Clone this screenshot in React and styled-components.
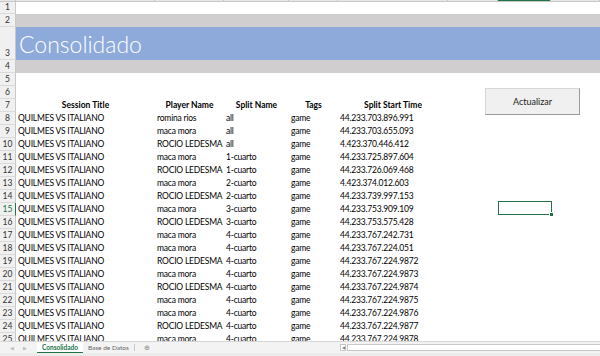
import React from "react";
import styled, { createGlobalStyle } from "styled-components";

const GlobalStyle = createGlobalStyle`
  html, body { margin: 0; padding: 0; background: #fff; overflow: hidden; }
  body { font-family: Lato, "Open Sans", sans-serif; }
  * { box-sizing: border-box; }
`;

const COLS = "16px 139px 69px 65px 49px 110px 50px 53px 49px";

const Window = styled.div`
  position: relative;
  width: 600px;
  height: 356px;
  display: flex;
  flex-direction: column;
  overflow: hidden;
`;

const ColStrip = styled.div`
  display: grid;
  grid-template-columns: ${COLS};
  height: 2px;
  background: #e6e6e6;
  border-bottom: 1px solid #c8c8c8;
  flex-shrink: 0;
`;

const ColMark = styled.div`
  border-right: 1px solid #c6c6c6;
  background: ${(p) => (p.$active ? "#217346" : "transparent")};
`;

const Sheet = styled.div`
  flex: 1;
  overflow: hidden;
  position: relative;
`;

const Row = styled.div`
  display: grid;
  grid-template-columns: ${COLS};
  height: ${(p) => p.$h || 13}px;
`;

const RowHead = styled.div`
  background: #f0f0f0;
  border-right: 1px solid ${(p) => (p.$active ? "#217346" : "#c8c8c8")};
  border-bottom: 1px solid #dadada;
  color: ${(p) => (p.$active ? "#217346" : "#333")};
  font-size: 8.5px;
  display: flex;
  align-items: flex-end;
  justify-content: center;
  padding-bottom: 1px;
`;

const Band = styled.div`
  grid-column: 2 / -1;
  background: ${(p) => p.$bg};
  display: flex;
  align-items: center;
`;

const Title = styled.span`
  font-family: Lato, sans-serif;
  font-weight: 300;
  font-size: 23px;
  color: #fff;
  padding-left: 3px;
  padding-top: 1px;
`;

const Cell = styled.div`
  font-size: 8.5px;
  color: #000;
  white-space: nowrap;
  overflow: visible;
  line-height: 13px;
  letter-spacing: ${(p) => (p.$head ? 0 : -0.2)}px;
  padding-left: ${(p) => (p.$head ? 0 : 2)}px;
  font-weight: ${(p) => (p.$head ? 700 : 400)};
  text-align: ${(p) => (p.$head ? "center" : "left")};
`;

const Button = styled.div`
  position: absolute;
  left: 485px;
  top: 86px;
  width: 95px;
  height: 27px;
  background: #f0f0f0;
  border: 1px solid #d6d6d6;
  border-right-color: #9a9a9a;
  border-bottom-color: #9a9a9a;
  display: flex;
  align-items: center;
  justify-content: center;
  font-size: 9px;
  color: #222;
`;

const Selected = styled.div`
  position: absolute;
  left: 498px;
  top: 199px;
  width: 54px;
  height: 14px;
  border: 1.5px solid #217346;
  &::after {
    content: "";
    position: absolute;
    right: -3px;
    bottom: -3px;
    width: 3px;
    height: 3px;
    background: #217346;
    border: 1px solid #fff;
  }
`;

const TabBar = styled.div`
  height: 12px;
  flex-shrink: 0;
  background: #f3f3f3;
  border-top: 1px solid #d6d6d6;
  display: flex;
  align-items: stretch;
  font-size: 6.5px;
  color: #666;
`;

const Nav = styled.div`
  width: 37px;
  display: flex;
  align-items: center;
  justify-content: space-around;
  padding: 0 6px;
  color: #bdbdbd;
  font-size: 5px;
`;

const Tab = styled.div`
  display: flex;
  align-items: center;
  padding: 0 5px;
  background: ${(p) => (p.$active ? "#fff" : "transparent")};
  color: ${(p) => (p.$active ? "#217346" : "#666")};
  font-weight: ${(p) => (p.$active ? 700 : 400)};
  border-bottom: ${(p) => (p.$active ? "1.5px solid #217346" : "none")};
  border-right: ${(p) => (p.$active ? "none" : "1px solid #c8c8c8")};
  margin: ${(p) => (p.$active ? "0" : "2px 0")};
`;

const AddTab = styled.div`
  margin-left: 9px;
  display: flex;
  align-items: center;
  color: #888;
`;

const Scroll = styled.div`
  margin-left: auto;
  width: 260px;
  display: flex;
  align-items: center;
  gap: 1px;
`;

const ScrollBtn = styled.div`
  width: 6px;
  height: 7px;
  border: 1px solid #c8c8c8;
  background: #fff;
  color: #777;
  font-size: 4px;
  display: flex;
  align-items: center;
  justify-content: center;
`;

const Track = styled.div`
  flex: 1;
  height: 7px;
  background: #fff;
  border: 1px solid #c8c8c8;
  border-right: none;
`;

const Status = styled.div`
  height: 3px;
  flex-shrink: 0;
  background: #ececec;
`;

const data = [
  ["romina rios", "all", "44.233.703.896.991"],
  ["maca mora", "all", "44.233.703.655.093"],
  ["ROCIO LEDESMA", "all", "4.423.370.446.412"],
  ["maca mora", "1-cuarto", "44.233.725.897.604"],
  ["ROCIO LEDESMA", "1-cuarto", "44.233.726.069.468"],
  ["maca mora", "2-cuarto", "4.423.374.012.603"],
  ["ROCIO LEDESMA", "2-cuarto", "44.233.739.997.153"],
  ["maca mora", "3-cuarto", "44.233.753.909.109"],
  ["ROCIO LEDESMA", "3-cuarto", "44.233.753.575.428"],
  ["maca mora", "4-cuarto", "44.233.767.242.731"],
  ["maca mora", "4-cuarto", "44.233.767.224.051"],
  ["ROCIO LEDESMA", "4-cuarto", "44.233.767.224.9872"],
  ["maca mora", "4-cuarto", "44.233.767.224.9873"],
  ["ROCIO LEDESMA", "4-cuarto", "44.233.767.224.9874"],
  ["maca mora", "4-cuarto", "44.233.767.224.9875"],
  ["maca mora", "4-cuarto", "44.233.767.224.9876"],
  ["ROCIO LEDESMA", "4-cuarto", "44.233.767.224.9877"],
  ["maca mora", "4-cuarto", "44.233.767.224.9878"],
];

const EmptyRow = ({ n, h }) => (
  <Row $h={h}>
    <RowHead>{n}</RowHead>
  </Row>
);

export default function App() {
  return (
    <Window>
      <GlobalStyle />
      <ColStrip>
        {Array.from({ length: 9 }).map((_, i) => (
          <ColMark key={i} $active={i === 7} />
        ))}
      </ColStrip>
      <Sheet>
        <EmptyRow n={1} h={12} />
        <Row>
          <RowHead>2</RowHead>
          <Band $bg="#d0cece" />
        </Row>
        <Row $h={33}>
          <RowHead>3</RowHead>
          <Band $bg="#8eaadb">
            <Title>Consolidado</Title>
          </Band>
        </Row>
        <Row>
          <RowHead>4</RowHead>
          <Band $bg="#d0cece" />
        </Row>
        <EmptyRow n={5} />
        <EmptyRow n={6} />
        <Row>
          <RowHead>7</RowHead>
          <Cell $head>Session Title</Cell>
          <Cell $head>Player Name</Cell>
          <Cell $head>Split Name</Cell>
          <Cell $head>Tags</Cell>
          <Cell $head>Split Start Time</Cell>
        </Row>
        {data.map((d, i) => (
          <Row key={i}>
            <RowHead $active={i + 8 === 15}>{i + 8}</RowHead>
            <Cell>QUILMES VS ITALIANO</Cell>
            <Cell>{d[0]}</Cell>
            <Cell>{d[1]}</Cell>
            <Cell>game</Cell>
            <Cell>{d[2]}</Cell>
          </Row>
        ))}
        <Button>Actualizar</Button>
        <Selected />
      </Sheet>
      <TabBar>
        <Nav>
          <span>◀</span>
          <span>▶</span>
        </Nav>
        <Tab $active>Consolidado</Tab>
        <Tab>Base de Datos</Tab>
        <AddTab>⊕</AddTab>
        <Scroll>
          <ScrollBtn>◀</ScrollBtn>
          <Track />
        </Scroll>
      </TabBar>
      <Status />
    </Window>
  );
}
